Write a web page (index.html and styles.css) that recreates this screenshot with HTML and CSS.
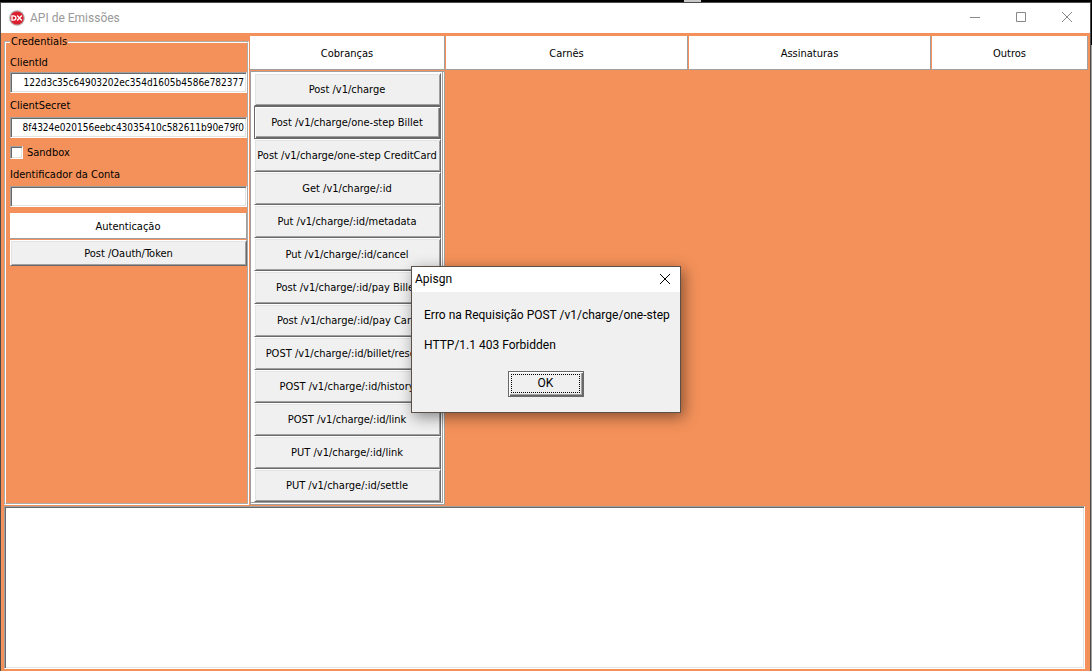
FILE: index.html
```html
<!DOCTYPE html>
<html lang="pt-BR">
<head>
<meta charset="utf-8">
<title>API de Emissões</title>
<link rel="stylesheet" href="styles.css">
</head>
<body>
<div class="window">
  <header class="titlebar">
    <svg class="app-icon" viewBox="0 0 16 16" aria-hidden="true">
      <circle cx="8" cy="8" r="7.8" fill="#b5adad"/>
      <circle cx="8" cy="8" r="6.6" fill="#dc1f2e"/>
      <g fill="none" stroke="#fff" stroke-width="1.4">
        <path d="M3 5.9v4.2h1.6q2.3 0 2.3-2.1t-2.3-2.1z"/>
        <path d="M8.2 5.6l4.6 4.8M12.8 5.6l-4.6 4.8"/>
      </g>
    </svg>
    <h1 class="title">API de Emissões</h1>
    <button class="win-btn" aria-label="Minimizar"><svg viewBox="0 0 10 10"><path d="M0 4.5h10"/></svg></button>
    <button class="win-btn" aria-label="Maximizar"><svg viewBox="0 0 10 10"><path d="M.5-.5h9v9h-9z"/></svg></button>
    <button class="win-btn" aria-label="Fechar"><svg viewBox="0 0 10 10"><path d="M0-1l10 10M10-1L0 9"/></svg></button>
  </header>
  <main class="client">
    <div class="upper">
      <fieldset class="credentials">
        <legend>Credentials</legend>
        <label class="caption" for="cid">ClientId</label>
        <input class="edit" id="cid" type="text" value="122d3c35c64903202ec354d1605b4586e782377">
        <label class="caption secret" for="secret">ClientSecret</label>
        <input class="edit" id="secret" type="text" value="8f4324e020156eebc43035410c582611b90e79f0">
        <label class="check"><input type="checkbox">Sandbox</label>
        <label class="caption account" for="account">Identificador da Conta</label>
        <input class="edit" id="account" type="text">
        <button class="flat auth">Autenticação</button>
        <button class="raised token">Post /Oauth/Token</button>
      </fieldset>
      <section class="work">
        <nav class="tabs">
          <button class="flat">Cobranças</button>
          <button class="flat">Carnês</button>
          <button class="flat">Assinaturas</button>
          <button class="flat">Outros</button>
        </nav>
        <div class="menu">
          <button class="raised">Post /v1/charge</button>
          <button class="raised current">Post /v1/charge/one-step Billet</button>
          <button class="raised">Post /v1/charge/one-step CreditCard</button>
          <button class="raised">Get /v1/charge/:id</button>
          <button class="raised">Put /v1/charge/:id/metadata</button>
          <button class="raised">Put /v1/charge/:id/cancel</button>
          <button class="raised">Post /v1/charge/:id/pay Billet</button>
          <button class="raised">Post /v1/charge/:id/pay Card</button>
          <button class="raised">POST /v1/charge/:id/billet/resend</button>
          <button class="raised">POST /v1/charge/:id/history</button>
          <button class="raised">POST /v1/charge/:id/link</button>
          <button class="raised">PUT /v1/charge/:id/link</button>
          <button class="raised">PUT /v1/charge/:id/settle</button>
        </div>
      </section>
    </div>
    <textarea class="memo" aria-label="Resposta"></textarea>
  </main>
</div>
<div class="dialog" role="dialog" aria-labelledby="dlg-title">
  <div class="dialog-bar">
    <h2 class="dialog-title" id="dlg-title">Apisgn</h2>
    <button class="dialog-close" aria-label="Fechar"><svg viewBox="0 0 10 10"><path d="M0-1l10 10M10-1L0 9"/></svg></button>
  </div>
  <div class="dialog-body">
    <p>Erro na Requisição POST /v1/charge/one-step</p>
    <p>HTTP/1.1 403 Forbidden</p>
    <button class="raised ok"><span>OK</span></button>
  </div>
</div>
</body>
</html>
```
FILE: styles.css
```css
* { box-sizing: border-box; }

body {
  margin: 0;
  min-height: 100vh;
  display: flex;
  padding: 2px 1px 0 0;
  background: linear-gradient(90deg, transparent 684px, #c8c8c8 684px, #c8c8c8 701px, transparent 701px) 0 0 / 100% 2px no-repeat,
    linear-gradient(#000 45px, #a0a0a0 45px);
  color: #000;
  font: 11px/13px "DejaVu Sans Condensed", "DejaVu Sans", sans-serif;
}

button, input, textarea { font: inherit; color: inherit; margin: 0; border-radius: 0; }
button { padding: 0; border: 0; }

.window {
  flex: 1;
  min-width: 0;
  display: flex;
  flex-direction: column;
  border: 1px solid #4a4a4a;
  border-bottom: 0;
  background: #f4915a;
}

.titlebar {
  height: 30px;
  display: flex;
  align-items: center;
  padding-left: 8px;
  background: #fff;
}
.app-icon { width: 16px; height: 16px; margin-right: 5px; }
.title {
  flex: 1;
  margin: 0;
  font: 12px/16px Roboto, sans-serif;
  color: #999;
}
.win-btn { width: 46px; height: 30px; background: none; }
.win-btn svg { width: 10px; height: 10px; display: block; margin: 0 auto; overflow: visible; }
.win-btn path { fill: none; stroke: #888; }

.client {
  flex: 1;
  display: flex;
  flex-direction: column;
  padding: 3px 2px 2px 3px;
}
.upper { display: flex; gap: 1px; }

.credentials {
  width: 245px;
  min-width: 0;
  margin: 0;
  padding: 0 0 0 4px;
  border: 2px groove #fff;
}
.credentials legend { padding: 0 1px; height: 12px; line-height: 12px; }
.caption { display: block; height: 13px; margin: 8px 0 3px; }
.secret { margin: 6px 0 5px; }
.edit {
  display: block;
  width: 100%;
  height: 21px;
  padding: 0 2px;
  border: 1px solid;
  border-color: #a0a0a0 #fff #fff #a0a0a0;
  outline: 0;
  background: #fff;
  box-shadow: inset 1px 1px #696969, inset -1px -1px #e3e3e3;
  font-size: 10px;
  text-align: right;
}
.check { display: flex; align-items: center; gap: 4px; margin-top: 8px; }
.check input {
  appearance: none;
  width: 13px;
  height: 13px;
  border: 1px solid;
  border-color: #a0a0a0 #fff #fff #a0a0a0;
  background: #fff;
  box-shadow: inset 1px 1px #696969, inset -1px -1px #e3e3e3;
}
.account { margin-top: 9px; margin-bottom: 5px; }

.flat {
  padding-top: 2px;
  background: #fff;
  border-right: 1px solid #a0a0a0;
  border-bottom: 1px solid #a0a0a0;
}
.raised {
  background: #f0f0f0;
  border: 1px solid;
  border-color: #fff #696969 #696969 #fff;
  box-shadow: inset 1px 1px #e3e3e3, inset -1px -1px #a0a0a0;
}
.auth, .token { display: block; width: 100%; height: 26px; }
.auth { margin-top: 6px; }
.token { margin-top: 1px; }

.work { flex: 1; min-width: 0; }
.tabs {
  display: grid;
  grid-template-columns: 195px 242fr 242fr 156fr;
  column-gap: 1px;
  height: 34px;
}
.menu {
  width: 195px;
  display: flex;
  flex-direction: column;
  margin-top: 1px;
  padding: 1px 3px 2px 3px;
  border: 1px solid #a0a0a0;
  background: #fff;
  box-shadow: inset -1px -1px #fff, inset -2px -2px #a0a0a0;
}
.menu .raised { height: 33px; padding-right: 1px; white-space: nowrap; }
.menu .current {
  border-color: #696969;
  box-shadow: inset 1px 1px #fff, inset -1px -1px #696969, inset -2px -2px #a0a0a0;
}

.memo {
  flex: 1;
  display: block;
  margin: 1px 3px 0 0;
  padding: 2px;
  resize: none;
  outline: 0;
  border: 1px solid;
  border-color: #a0a0a0 #fff #fff #a0a0a0;
  background: #fff;
  box-shadow: inset 1px 1px #696969, inset -1px -1px #e3e3e3;
}

.dialog {
  position: absolute;
  left: 411px;
  top: 266px;
  width: 270px;
  border: 1px solid #5a5048;
  background: #f0f0f0;
  box-shadow: 3px 4px 14px rgba(0, 0, 0, .45);
  font: 12px/15px Roboto, sans-serif;
}
.dialog-bar {
  display: flex;
  align-items: center;
  justify-content: space-between;
  height: 25px;
  padding: 0 10px 0 3px;
  background: #fff;
}
.dialog-title { margin: 0; font: inherit; }
.dialog-close { width: 10px; height: 10px; background: none; }
.dialog-close svg { display: block; width: 10px; height: 10px; overflow: visible; }
.dialog-close path { fill: none; stroke: #000; }
.dialog-body {
  display: flex;
  flex-direction: column;
  padding: 16px 12px 15px;
  white-space: nowrap;
}
.dialog-body p { margin: 0 0 15px; }
.ok {
  align-self: center;
  width: 76px;
  height: 26px;
  margin-top: 3px;
  padding: 2px 3px 3px 2px;
  border-color: #696969;
  box-shadow: inset 1px 1px #fff, inset -1px -1px #696969, inset -2px -2px #a0a0a0;
}
.ok span { display: flex; align-items: center; justify-content: center; height: 100%; border: 1px dotted #000; }
```
